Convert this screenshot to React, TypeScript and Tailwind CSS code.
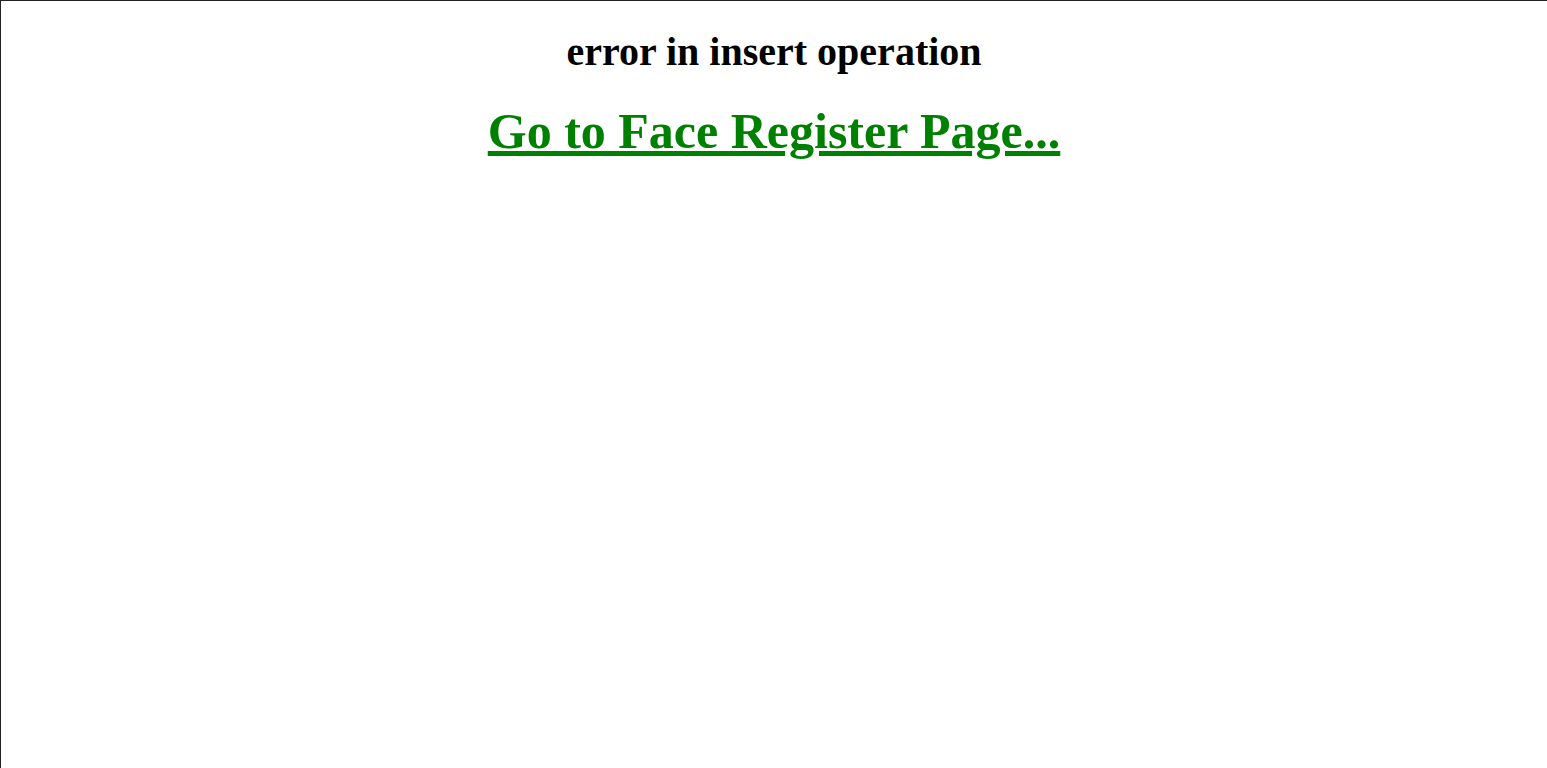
export default function App() {
  return (
    <div className="min-h-[768px] border-t border-l border-[#222] bg-white font-['Liberation_Serif',serif] text-center">
      <h2 className="mt-[28px] text-[40px] font-bold leading-[1.15] text-black">error in insert operation</h2>
      <h1 className="mt-[28px] text-[50px] font-bold leading-[1.15]">
        <a href="#" className="text-[#008000] underline">
          Go to Face Register Page...
        </a>
      </h1>
    </div>
  )
}
